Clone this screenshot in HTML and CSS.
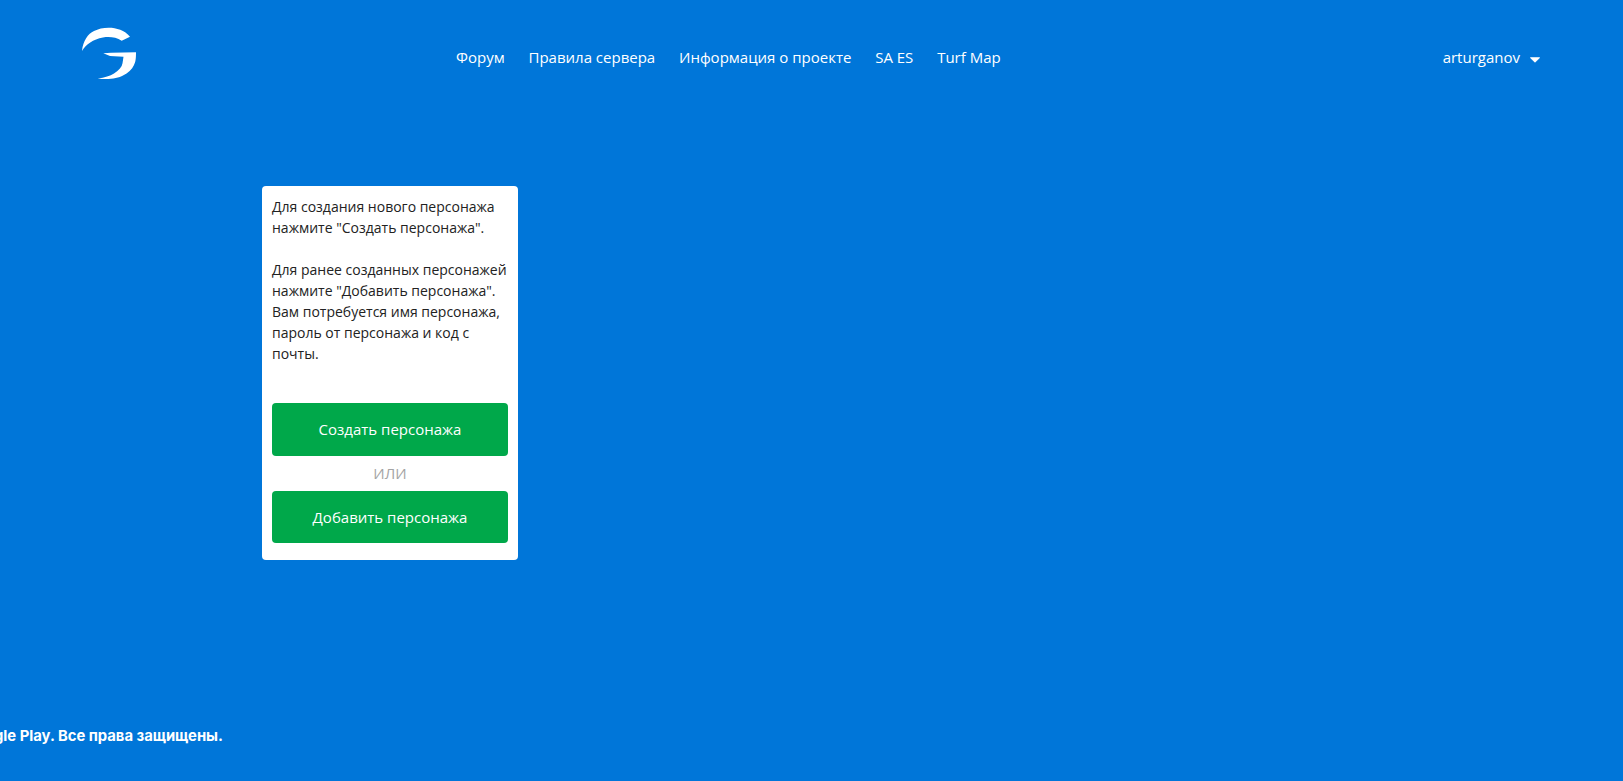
FILE: index.html
```html
<!DOCTYPE html>
<html lang="ru">
<head>
<meta charset="utf-8">
<title>Личный кабинет</title>
<link rel="stylesheet" href="styles.css">
</head>
<body>
<header class="header">
  <a class="logo" href="#" aria-label="Логотип">
    <svg width="60" height="56" viewBox="0 0 60 56">
      <path fill="#fff" d="M2 25C3 15 8 7.500 14 5C24 0 41 0 50 10.700L41.700 14.700C36 11 29 10.500 23 11.500C13 13.500 6 18 2 25Z"/>
      <path fill="#fff" d="M23.300 27.300L31 26.800L56 26.300C56 33 55.500 36 54 39C52 43.500 48 47 43 49.500C38 52.500 28 54 17.700 52.500C25 51.500 30 50 34 47.500C39 44 42 41 42.500 37.300L43.500 30.700L30 30Z"/>
    </svg>
  </a>
  <nav class="nav">
    <a href="#">Форум</a>
    <a href="#">Правила сервера</a>
    <a href="#">Информация о проекте</a>
    <a href="#">SA ES</a>
    <a href="#">Turf Map</a>
  </nav>
  <div class="user">arturganov<svg class="caret" width="10" height="6" viewBox="0 0 10 6"><path fill="#fff" stroke="#fff" stroke-linejoin="round" d="M.5 .8H9.500L5 5.200Z"/></svg></div>
</header>
<main class="main">
  <section class="card">
    <p class="info">Для создания нового персонажа нажмите "Создать персонажа".<br><br>Для ранее созданных персонажей нажмите "Добавить персонажа". Вам потребуется имя персонажа, пароль от персонажа и код с почты.</p>
    <a class="btn" href="#">Создать персонажа</a>
    <div class="or">ИЛИ</div>
    <a class="btn btn-second" href="#">Добавить персонажа</a>
  </section>
</main>
<footer class="footer"><span>© 2024 Google Play. Все права защищены.</span></footer>
</body>
</html>
```

FILE: styles.css
```css
* { box-sizing: border-box; }
html, body { height: 100%; }
body {
  margin: 0;
  height: 781px;
  overflow: hidden;
  background: #0076d9;
  color: #fff;
  font-family: "Open Sans", sans-serif;
  display: flex;
  flex-direction: column;
}
a { color: inherit; text-decoration: none; }
.header {
  display: flex;
  align-items: center;
  height: 114px;
  padding: 0 83px 0 80px;
}
.logo { display: block; width: 60px; height: 56px; margin-right: 316px; margin-bottom: 6px; }
.logo svg { display: block; }
.nav { display: flex; gap: 23.8px; font-size: 15px; }
.user { margin-left: auto; font-size: 15px; display: flex; align-items: center; }
.caret { margin-left: 10px; margin-top: 5px; }
.main { flex: 1; padding: 72px 0 0 262px; }
.card {
  width: 256px;
  height: 374px;
  padding: 10px;
  background: #fff;
  border-radius: 4px;
  color: #222;
}
.info {
  margin: 0 0 28px;
  height: 179px;
  font-size: 14px;
  line-height: 21px;
}
.btn {
  display: flex;
  align-items: center;
  justify-content: center;
  height: 53px;
  padding-bottom: 2px;
  background: #00a84a;
  border-radius: 4px;
  color: #fff;
  font-size: 15px;
  font-weight: 500;
}
.btn-second { height: 52px; padding-bottom: 0; }
.or {
  height: 35px;
  line-height: 35px;
  text-align: center;
  color: #a4a4a4;
  font-size: 15px;
}
.footer {
  width: 223px;
  height: 54px;
  display: flex;
  justify-content: flex-end;
  white-space: nowrap;
  font-family: Inter, sans-serif;
  font-weight: 700;
  font-size: 14.8px;
}
```
